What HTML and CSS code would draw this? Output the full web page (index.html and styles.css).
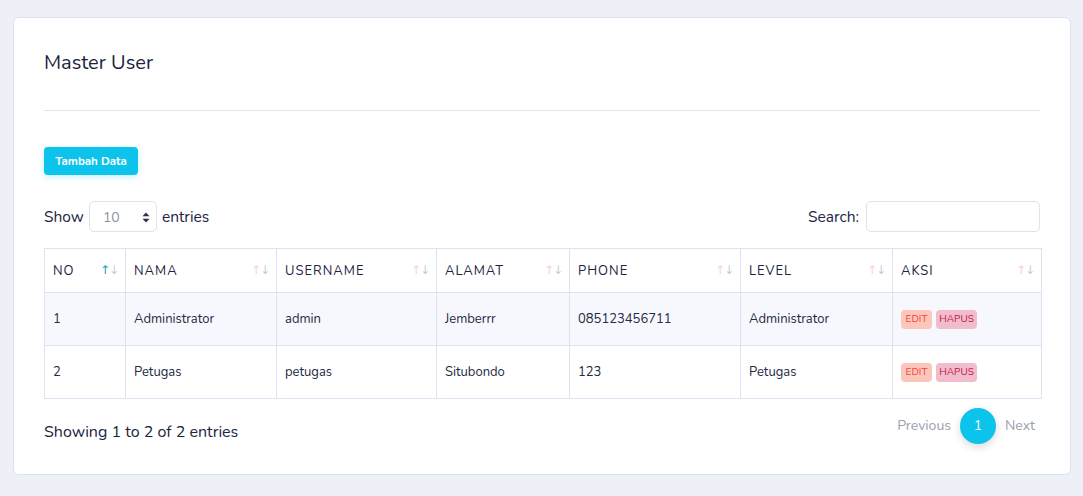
FILE: index.html
```html
<!DOCTYPE html>
<html>
<head>
<meta charset="utf-8">
<link rel="stylesheet" href="styles.css">
</head>
<body>
<div class="card">
  <h4 class="title">Master User</h4>
  <hr class="sep">
  <button class="btn-add">Tambah Data</button>
  <div class="controls">
    <label class="length">Show
      <span class="select">10
        <svg class="caret" width="8" height="11" viewBox="0 0 8 11"><path d="M4 0.5L7.5 4.2H0.5Z M4 10.5L7.5 6.8H0.5Z" fill="#2a3048"/></svg>
      </span>
      entries</label>
    <label class="search">Search: <span class="input"></span></label>
  </div>
  <table class="grid">
    <colgroup>
      <col class="w-no"><col class="w-nama"><col class="w-user"><col class="w-alamat"><col class="w-phone"><col class="w-level"><col class="w-aksi">
    </colgroup>
    <thead>
      <tr>
        <th><span>NO</span><i class="sort active"><b class="up">↑</b><b class="dn">↓</b></i></th>
        <th><span>NAMA</span><i class="sort"><b class="up">↑</b><b class="dn">↓</b></i></th>
        <th><span>USERNAME</span><i class="sort"><b class="up">↑</b><b class="dn">↓</b></i></th>
        <th><span>ALAMAT</span><i class="sort"><b class="up">↑</b><b class="dn">↓</b></i></th>
        <th><span>PHONE</span><i class="sort"><b class="up">↑</b><b class="dn">↓</b></i></th>
        <th><span>LEVEL</span><i class="sort"><b class="up">↑</b><b class="dn">↓</b></i></th>
        <th><span>AKSI</span><i class="sort"><b class="up">↑</b><b class="dn">↓</b></i></th>
      </tr>
    </thead>
    <tbody>
      <tr class="odd">
        <td>1</td><td>Administrator</td><td>admin</td><td>Jemberrr</td><td>085123456711</td><td>Administrator</td>
        <td><span class="badge edit">EDIT</span><span class="badge del">HAPUS</span></td>
      </tr>
      <tr>
        <td>2</td><td>Petugas</td><td>petugas</td><td>Situbondo</td><td>123</td><td>Petugas</td>
        <td><span class="badge edit">EDIT</span><span class="badge del">HAPUS</span></td>
      </tr>
    </tbody>
  </table>
  <div class="footer">
    <div class="info">Showing 1 to 2 of 2 entries</div>
    <div class="pager">
      <span class="pg">Previous</span>
      <span class="pg-cur">1</span>
      <span class="pg">Next</span>
    </div>
  </div>
</div>
</body>
</html>
```

FILE: styles.css
```css
html, body { margin: 0; padding: 0; }
body {
  background: #eef0f7;
  font-family: "Nunito", "Lato", "Noto Sans", sans-serif;
  color: #1d2342;
  width: 1083px;
  height: 496px;
  overflow: hidden;
  padding: 17px 0 0 13px;
  box-sizing: border-box;
}
.card {
  width: 1058px;
  height: 458px;
  box-sizing: border-box;
  background: #fff;
  border: 1px solid #dde2ef;
  border-radius: 6px;
  padding: 31px 30px 0 30px;
}
.title {
  margin: 0;
  font-size: 20px;
  font-weight: 400;
  line-height: 27px;
  color: #1a1f3e;
  padding-top: 0;
}
.sep {
  border: 0;
  border-top: 1px solid #e3e6ee;
  margin: 34px 0 36px 0;
}
.btn-add {
  display: block;
  height: 28px;
  width: 94px;
  border: 0;
  border-radius: 4px;
  background: #0cc3eb;
  color: #fff;
  font-family: inherit;
  font-size: 11.5px;
  font-weight: 700;
  padding: 0;
  box-shadow: 0 2px 6px rgba(12,195,235,0.25);
}
.controls {
  display: flex;
  justify-content: space-between;
  align-items: center;
  margin-top: 25px;
  height: 32px;
  font-size: 15.5px;
  color: #1d2342;
}
.length, .search { display: flex; align-items: center; }
.select {
  display: inline-flex;
  align-items: center;
  justify-content: space-between;
  box-sizing: border-box;
  width: 68px;
  height: 31px;
  margin: 0 5px 0 5px;
  padding: 2px 6px 0 13px;
  border: 1px solid #dde2ef;
  border-radius: 5px;
  color: #8d93a8;
  font-size: 14px;
}
.input {
  display: inline-block;
  box-sizing: border-box;
  width: 174px;
  height: 31px;
  margin-left: 7px;
  border: 1px solid #dde2ef;
  border-radius: 5px;
}
.grid {
  margin-top: 16px;
  width: 997px;
  border-collapse: collapse;
  table-layout: fixed;
  font-size: 13px;
}
.w-no { width: 81px; }
.w-nama { width: 151px; }
.w-user { width: 160px; }
.w-alamat { width: 133px; }
.w-phone { width: 171px; }
.w-level { width: 152px; }
.w-aksi { width: 149px; }
.grid th, .grid td {
  border: 1px solid #dde1f1;
  text-align: left;
}
.grid th {
  height: 43px;
  padding: 0 7px 0 8px;
  font-weight: 400;
  font-size: 13px;
  letter-spacing: 1px;
  color: #1d2342;
  position: relative;
}
.sort {
  position: absolute;
  right: 7px;
  top: 14px;
  font-style: normal;
  font-size: 12px;
  letter-spacing: -1px;
  font-family: "DejaVu Sans", sans-serif;
}
.sort b { font-weight: 400; }
.sort .up { color: #f6d3dc; }
.sort .dn { color: #c9ccd6; }
.sort.active .up { color: #1aa5a8; }
.grid td {
  height: 52px;
  padding: 0 8px;
  color: #252a44;
}
.grid tr.odd td { background: #f7f8fd; }
.badge {
  display: inline-block;
  height: 19px;
  line-height: 19px;
  border-radius: 4px;
  font-size: 10px;
  margin-right: 4px;
  vertical-align: middle;
  text-align: center;
}
.badge.edit { background: #fdc6bb; color: #f2453b; width: 31px; }
.badge.del { background: #f1bccb; color: #c3164a; width: 41px; }
.footer {
  display: flex;
  justify-content: space-between;
  align-items: center;
  margin-top: 8px;
  height: 40px;
}
.info { font-size: 16px; color: #1d2342; padding-top: 9px; }
.pager { display: flex; align-items: center; font-size: 14px; color: #9aa0b0; padding-right: 5px; margin-top: -3px; }
.pg-cur {
  display: inline-flex;
  align-items: center;
  justify-content: center;
  width: 36px;
  height: 36px;
  border-radius: 50%;
  background: #0cc3eb;
  color: #fff;
  margin: 0 9px 0 9px;
  box-shadow: 0 3px 8px rgba(0,0,0,0.15);
}
```
